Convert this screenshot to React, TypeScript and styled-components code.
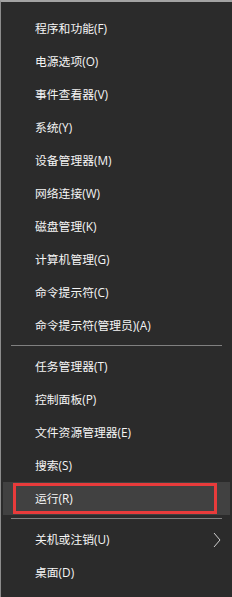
import React from "react";
import styled, { createGlobalStyle } from "styled-components";

const Global = createGlobalStyle`
  html, body { margin: 0; padding: 0; background: #2b2b2b; }
  * { box-sizing: border-box; }
`;

const Menu = styled.div`
  width: 232px;
  height: 597px;
  background: #2b2b2b;
  border-top: 2px solid #a3a3a3;
  border-left: 1px solid #8c8c8c;
  padding-top: 10px;
  display: flex;
  flex-direction: column;
  font-family: "Open Sans", "Noto Sans CJK SC", sans-serif;
  font-size: 11.8px;
  color: #f5f5f5;
`;

const Row = styled.div<{ $active?: boolean }>`
  position: relative;
  height: 33px;
  margin: 0 2px;
  padding: 0 9px 0 32px;
  display: flex;
  align-items: center;
  background: ${(p) => (p.$active ? "#414141" : "transparent")};
`;

const Label = styled.span`
  line-height: 1;
  white-space: nowrap;
`;

const Separator = styled.div`
  height: 8px;
  padding-top: 3px;
  margin: 0 10px;
  &::after {
    content: "";
    display: block;
    height: 1px;
    background: #808080;
  }
`;

const Chevron = styled.svg`
  margin-left: auto;
  width: 8px;
  height: 16px;
`;

const Highlight = styled.div`
  position: absolute;
  left: 10px;
  top: 1px;
  width: 204px;
  height: 31px;
  border: 3px solid #e83b3b;
  pointer-events: none;
`;

type Item = { label: string; active?: boolean; sub?: boolean };

const groups: Item[][] = [
  [
    { label: "程序和功能(F)" },
    { label: "电源选项(O)" },
    { label: "事件查看器(V)" },
    { label: "系统(Y)" },
    { label: "设备管理器(M)" },
    { label: "网络连接(W)" },
    { label: "磁盘管理(K)" },
    { label: "计算机管理(G)" },
    { label: "命令提示符(C)" },
    { label: "命令提示符(管理员)(A)" },
  ],
  [
    { label: "任务管理器(T)" },
    { label: "控制面板(P)" },
    { label: "文件资源管理器(E)" },
    { label: "搜索(S)" },
    { label: "运行(R)", active: true },
  ],
  [{ label: "关机或注销(U)", sub: true }, { label: "桌面(D)" }],
];

export default function App() {
  return (
    <>
      <Global />
      <Menu>
        {groups.map((g, gi) => (
          <React.Fragment key={gi}>
            {gi > 0 && <Separator />}
            {g.map((it) => (
              <Row key={it.label} $active={it.active}>
                <Label>{it.label}</Label>
                {it.sub && (
                  <Chevron viewBox="0 0 8 16">
                    <path d="M1 1 L7 8 L1 15" fill="none" stroke="#cfcfcf" strokeWidth="1" />
                  </Chevron>
                )}
                {it.active && <Highlight />}
              </Row>
            ))}
          </React.Fragment>
        ))}
      </Menu>
    </>
  );
}
